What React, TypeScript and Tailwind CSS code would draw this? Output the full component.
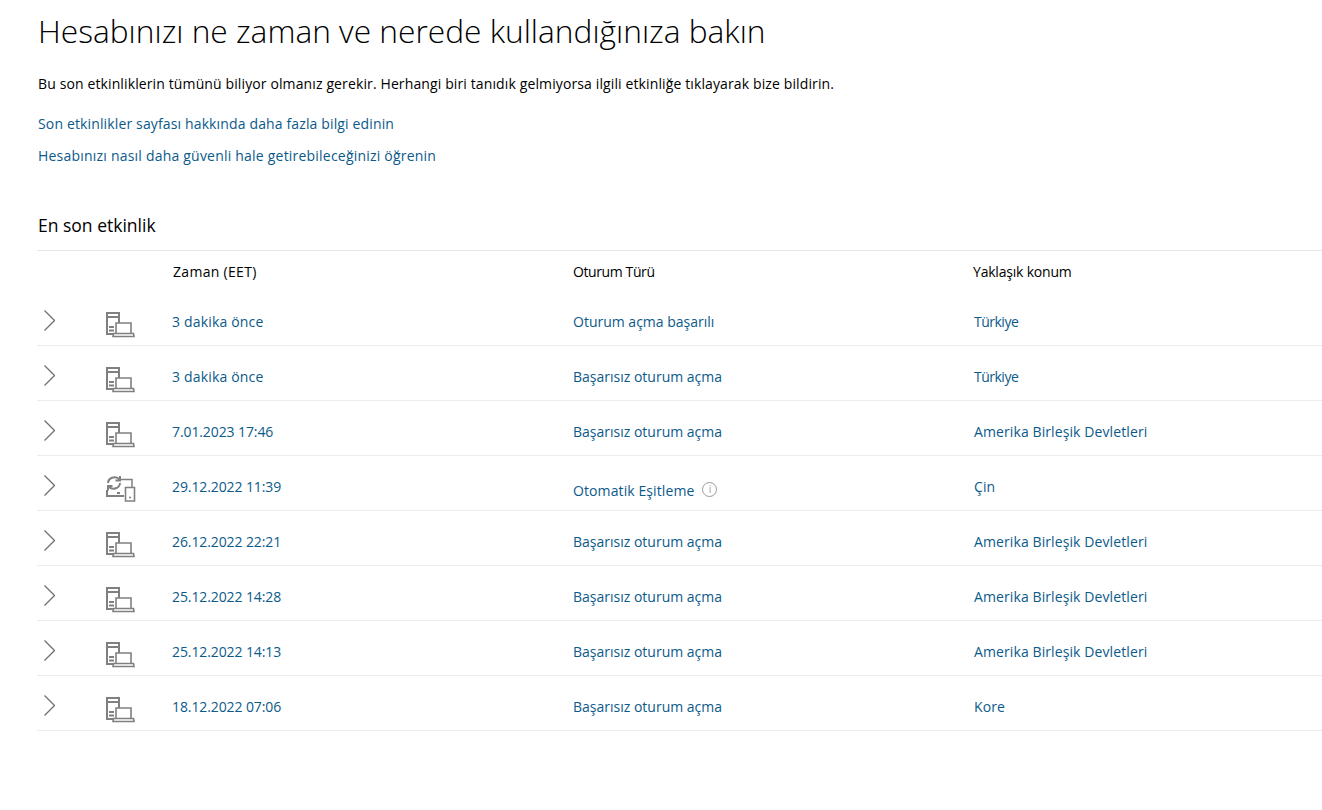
const rows = [
  { time: '3 dakika önce', type: 'Oturum açma başarılı', place: 'Türkiye' },
  { time: '3 dakika önce', type: 'Başarısız oturum açma', place: 'Türkiye' },
  { time: '7.01.2023 17:46', type: 'Başarısız oturum açma', place: 'Amerika Birleşik Devletleri' },
  { time: '29.12.2022 11:39', type: 'Otomatik Eşitleme', place: 'Çin', sync: true },
  { time: '26.12.2022 22:21', type: 'Başarısız oturum açma', place: 'Amerika Birleşik Devletleri' },
  { time: '25.12.2022 14:28', type: 'Başarısız oturum açma', place: 'Amerika Birleşik Devletleri' },
  { time: '25.12.2022 14:13', type: 'Başarısız oturum açma', place: 'Amerika Birleşik Devletleri' },
  { time: '18.12.2022 07:06', type: 'Başarısız oturum açma', place: 'Kore' },
]

function Chevron() {
  return (
    <svg width="11" height="21" viewBox="0 0 11 21" fill="none" stroke="#707070" strokeWidth="1.3">
      <path d="M.5.5l10 10-10 10" />
    </svg>
  )
}

function DeviceIcon() {
  return (
    <svg width="29" height="26" viewBox="0 0 29 26" fill="none" stroke="#808080" strokeWidth="2">
      <path d="M7 22H1V1h12v10" />
      <path d="M1 5h12M3 15h5M3 18.5h5" />
      <path d="M10 21V11h15v10" strokeWidth="1.6" />
      <path d="M7.5 21.5h20l.5 3H7z" strokeWidth="1.6" />
    </svg>
  )
}

function SyncIcon() {
  return (
    <svg width="30" height="26" viewBox="0 0 30 26" fill="none" stroke="#808080" strokeWidth="2">
      <path d="M2 7a6.5 6 0 0 1 11-4M14 0v4.500h-4.500" />
      <path d="M14 7a6.500 6 0 0 1-11 4M2 14.500V10h4.500" />
      <path d="M1 14v6h17M11 17h3" />
      <path d="M14 3.500h12V11" strokeWidth="1.500" />
      <path d="M19.500 11.500h9v13.500h-9zM23 21.500h2" strokeWidth="1.600" />
    </svg>
  )
}

export default function App() {
  return (
    <div className="min-h-screen bg-white text-black pt-2 pl-[37px] font-['Open_Sans',sans-serif] text-[14px]">
      <h1 className="pl-px text-[31.7px] leading-[45px] font-light">Hesabınızı ne zaman ve nerede kullandığınıza bakın</h1>
      <p className="pl-px mt-[21px] leading-5 tracking-[0.12px]">Bu son etkinliklerin tümünü biliyor olmanız gerekir. Herhangi biri tanıdık gelmiyorsa ilgili etkinliğe tıklayarak bize bildirin.</p>
      <p className="pl-px mt-5 leading-5 text-[#0b5a8a] tracking-[0.14px]">Son etkinlikler sayfası hakkında daha fazla bilgi edinin</p>
      <p className="pl-px mt-3 leading-5 text-[#0b5a8a] tracking-[0.21px]">Hesabınızı nasıl daha güvenli hale getirebileceğinizi öğrenin</p>
      <h2 className="pl-px mt-[45px] text-[17.5px] leading-7 font-normal">En son etkinlik</h2>
      <div className="mt-[11px] border-t border-[#e6e6e6]">
        <div className="flex h-[40px] items-center">
          <div className="w-[136px]" />
          <div className="w-[400px] tracking-[0.3px]">Zaman (EET)</div>
          <div className="w-[400px] tracking-[-0.4px]">Oturum Türü</div>
          <div className="tracking-[-0.2px]">Yaklaşık konum</div>
        </div>
        {rows.map((row, i) => (
          <div key={i} className="flex h-[55px] items-center border-b border-[#ececec] pt-[6px] text-[#0b5a8a]">
            <div className="w-[69px] pl-[7px] pb-[2px]"><Chevron /></div>
            <div className={row.sync ? 'w-[66px] pt-[6px]' : 'w-[66px] pt-[7px]'}>{row.sync ? <SyncIcon /> : <DeviceIcon />}</div>
            <div className={row.time.includes('dakika') ? 'w-[401px] tracking-[0.17px]' : 'w-[401px] tracking-[-0.1px]'}>{row.time}</div>
            <div className={row.sync ? 'w-[400px] flex items-center gap-2 pt-2 tracking-[0.1px]' : 'w-[400px]'}>
              {row.type}
              {row.sync && (
                <span className="flex size-[15px] -translate-y-px items-center justify-center rounded-full border-[1.5px] border-[#999999] text-[10px] leading-none text-[#999999]">i</span>
              )}
            </div>
            <div className={row.place === 'Türkiye' ? 'pl-px tracking-[-0.5px]' : 'pl-px tracking-[0.1px]'}>{row.place}</div>
          </div>
        ))}
      </div>
    </div>
  )
}
